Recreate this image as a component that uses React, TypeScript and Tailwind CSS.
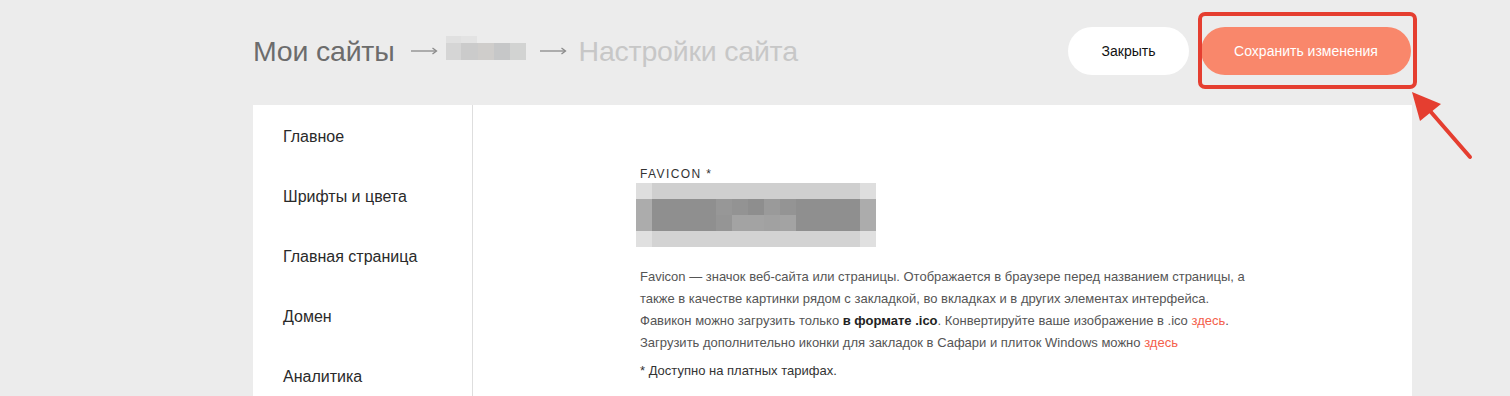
import React from "react";

const menuItems = ["Главное", "Шрифты и цвета", "Главная страница", "Домен", "Аналитика"];

// pixelated placeholder standing in for the blurred favicon preview
const faviconCells: string[][] = [
  ["#dedede", ...Array(13).fill("#cfcfcf"), "#dedede"],
  ["#acacac", "#8f8f8f", "#8f8f8f", "#8f8f8f", "#8f8f8f", "#979797", "#939393", "#8e8e8e", "#9a9a9a", "#949494", "#8f8f8f", "#8f8f8f", "#8f8f8f", "#8f8f8f", "#acacac"],
  ["#acacac", "#8f8f8f", "#8f8f8f", "#8f8f8f", "#8f8f8f", "#959595", "#a3a3a3", "#a3a3a3", "#a1a1a1", "#a3a3a3", "#8f8f8f", "#8f8f8f", "#8f8f8f", "#8f8f8f", "#acacac"],
  ["#e0e0e0", ...Array(13).fill("#d3d3d3"), "#e0e0e0"],
];

function ThinArrow({ className = "" }: { className?: string }) {
  return (
    <svg width="28" height="10" viewBox="0 0 28 10" className={"shrink-0 " + className}>
      <line x1="1" y1="5" x2="26" y2="5" stroke="#8a8a8a" strokeWidth="1.3" />
      <path d="M22.5 2 L26.5 5 L22.5 8" fill="none" stroke="#8a8a8a" strokeWidth="1.3" />
    </svg>
  );
}

function SiteNameBlur() {
  return (
    <div className="ml-[8px] mt-[-6px] flex flex-col">
      <div className="flex h-[7px]">
        <div className="w-[15px] bg-[#e0e0e0]" />
        <div className="w-[16px] bg-[#e3e3e3]" />
      </div>
      <div className="flex h-[17px]">
        <div className="w-[15px] bg-[#d5d5d5]" />
        <div className="w-[17px] bg-[#cbcbcb]" />
        <div className="w-[16px] bg-[#cfcdcb]" />
        <div className="w-[16px] bg-[#c6c7c8]" />
        <div className="w-[16px] bg-[#d2d3d2]" />
      </div>
    </div>
  );
}

export default function App() {
  return (
    <div className="relative min-h-screen overflow-hidden bg-[#ececec] font-['Liberation_Sans',Arial,sans-serif]">
      <div className="ml-[252px] w-[1160px]">
        <header className="flex h-[105px] items-start justify-between pt-[27px]">
          <div className="flex h-[48px] items-center pl-px">
            <h1 className="text-[28.5px] font-normal tracking-[-0.2px] text-[#6c6c6c]">Мои сайты</h1>
            <ThinArrow className="ml-[15px]" />
            <SiteNameBlur />
            <ThinArrow className="ml-[13px]" />
            <span className="ml-[12px] text-[28.5px] tracking-[-0.2px] text-[#c7c7c7]">Настройки сайта</span>
          </div>
          <div className="flex gap-[12px] pr-px">
            <button className="h-[48px] w-[121px] rounded-full bg-white text-[14px] text-[#111]">Закрыть</button>
            <button className="h-[48px] w-[210px] rounded-full bg-[#f9876b] text-[14px] text-white">
              Сохранить изменения
            </button>
          </div>
        </header>

        <div className="ml-px flex min-h-[300px] bg-white">
          <nav className="flex w-[220px] shrink-0 flex-col border-r border-[#dedede] pl-[30px] pt-[2px]">
            {menuItems.map((item) => (
              <div key={item} className="flex h-[60px] items-center text-[16px] text-[#2a2a2a]">
                {item}
              </div>
            ))}
          </nav>

          <main className="flex-1 pl-[167px] pt-[61px]">
            <div className="text-[12px] leading-[16px] tracking-[1.4px] text-[#333]">FAVICON *</div>
            <div className="-ml-[4px] mt-[1px] flex w-[240px] flex-col">
              {faviconCells.map((row, r) => (
                <div key={r} className="flex h-[16px]">
                  {row.map((c, i) => (
                    <div key={i} className="h-full w-[16px]" style={{ background: c }} />
                  ))}
                </div>
              ))}
            </div>

            <p className="mt-[19px] w-[610px] text-[13px] leading-[22px] text-[#555]">
              Favicon — значок веб-сайта или страницы. Отображается в браузере перед названием страницы, а
              также в качестве картинки рядом с закладкой, во вкладках и в других элементах интерфейса.
              <br />
              Фавикон можно загрузить только <b className="font-bold text-[#222]">в формате .ico</b>. Конвертируйте ваше
              изображение в .ico <a className="text-[#f4604b]">здесь</a>.
              <br />
              Загрузить дополнительно иконки для закладок в Сафари и плиток Windows можно{" "}
              <a className="text-[#f4604b]">здесь</a>
            </p>
            <p className="mt-[6px] text-[13px] leading-[22px] text-[#333]">* Доступно на платных тарифах.</p>
          </main>
        </div>
      </div>

      {/* annotation: red frame around the save button */}
      <div className="absolute left-[1198px] top-[12px] h-[77px] w-[219px] rounded-[7px] border-4 border-[#e53e30]" />
      <svg className="absolute left-0 top-0" width="1510" height="396" viewBox="0 0 1510 396">
        <line x1="1470" y1="157" x2="1424" y2="104" stroke="#e53e30" strokeWidth="4" strokeLinecap="round" />
        <polygon points="1412,92 1441,104 1420,121" fill="#e53e30" />
      </svg>
    </div>
  );
}
